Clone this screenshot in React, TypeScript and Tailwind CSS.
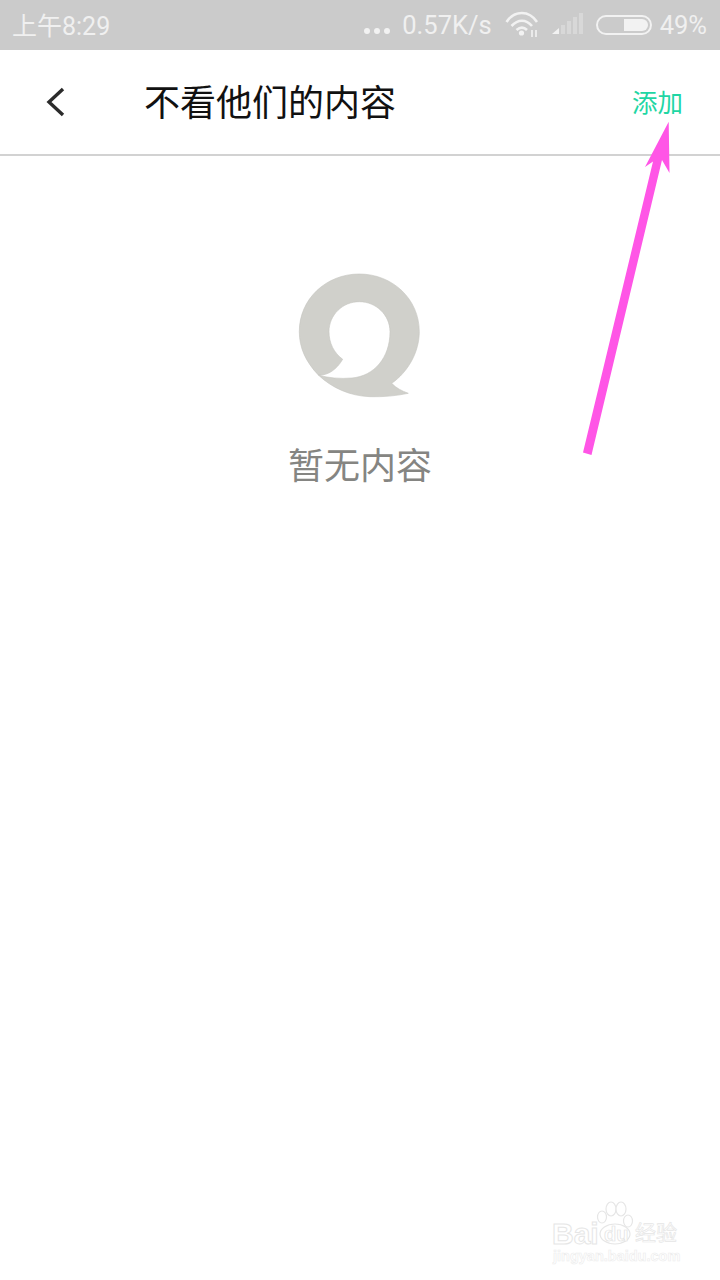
const SANS = "font-['Roboto','Noto_Sans_CJK_SC',sans-serif]";

function WifiIcon() {
  return (
    <svg width="36" height="34" viewBox="0 0 36 34" fill="none" stroke="#f2f2f2" strokeWidth="2.6">
      <path d="M1.5 14C9.500 2 24 2 32 14" />
      <path d="M6.500 18C13 11 21 11 27 18" />
      <path d="M11.500 22C15 19 19 19 22 22" />
      <circle cx="16.500" cy="25" r="2.6" fill="#f2f2f2" stroke="none" />
      <path d="M27 22V29M31 22V29" strokeWidth="1.6" />
    </svg>
  );
}

function SignalIcon() {
  return (
    <svg width="32" height="24" viewBox="0 0 32 24">
      <path d="M0 21L7 15V21Z" fill="#f2f2f2" />
      <path d="M9 12H13V21H9ZM15 8H19V21H15ZM21 4H25V21H21ZM27 0H31V21H27Z" fill="#d8d8d8" />
    </svg>
  );
}

function BatteryIcon() {
  return (
    <div className="w-[56px] h-[20px] rounded-full border-2 border-[#f2f2f2] p-[2px] flex justify-end">
      <div className="w-[24px] h-full rounded-r-full bg-[#f2f2f2]" />
    </div>
  );
}

function EmptyLogo() {
  return (
    <svg width="130" height="130" viewBox="295 270 130 130" className="block">
      <path
        fill="#d0d0cb"
        fillRule="evenodd"
        stroke="#c4c4bf"
        strokeWidth="0.6"
        d="M318.300 375C306 362 299.300 348 299.300 331.700C299.300 299 326 274 359.300 274C392.500 274 419.300 299 419.300 331.700C419.300 352 408 372 391.700 383.300C396 388 402 391 408.300 393.300C396 396 383 397 370 396.700C350 396 332 388 318.300 375ZM318.300 375C328 376 337 369 342.700 359.300C334 353 329 343 329 331.700C329 315 342.500 301.700 359.300 301.700C376 301.700 390 315 390 331.700C390 358 374 376 352 378C340 379 328 378 318.300 375Z"
      />
    </svg>
  );
}

function Arrow() {
  return (
    <svg width="720" height="1280" viewBox="0 0 720 1280" className="absolute inset-0 pointer-events-none">
      <path
        fill="#ff55e6"
        d="M668.700 121.700L669.500 173L662 160L591.500 455L583 452.500L653 161.500L645 167Z"
      />
    </svg>
  );
}

function Watermark() {
  return (
    <div className="absolute left-[552px] top-[1200px] w-[136px] h-[66px] font-['Liberation_Sans','Noto_Sans_CJK_SC',sans-serif] text-white">
      <svg width="56" height="50" viewBox="0 0 56 50" className="absolute left-[38px] top-0" fill="#ffffff" stroke="#e6e6e6" strokeWidth="1.2">
        <ellipse cx="12" cy="17" rx="4.500" ry="6" />
        <ellipse cx="21" cy="9" rx="5" ry="7" />
        <ellipse cx="31" cy="9" rx="5" ry="7" />
        <ellipse cx="38" cy="21" rx="4.500" ry="6" />
        <ellipse cx="25" cy="34" rx="15" ry="10" />
      </svg>
      <span className="absolute left-0 top-[17px] text-[30px] leading-[34px] font-bold [-webkit-text-stroke:1px_#e6e6e6]">Bai</span>
      <span className="absolute left-[52px] top-[22px] text-[20px] leading-[24px] font-bold [-webkit-text-stroke:0.7px_#e2e2e2]">du</span>
      <span className="absolute left-[83px] top-[20px] text-[21px] leading-[26px] whitespace-nowrap [-webkit-text-stroke:0.7px_#e6e6e6]">经验</span>
      <span className="absolute left-[1px] top-[47px] text-[14.500px] leading-[18px] font-bold whitespace-nowrap [-webkit-text-stroke:0.6px_#ececec]">jingyan.baidu.com</span>
    </div>
  );
}

export default function App() {
  return (
    <div className={`relative w-[720px] h-[1280px] overflow-hidden bg-white ${SANS}`}>
      {/* status bar */}
      <div className="h-[50px] bg-[#cbcbcb] flex items-center pl-[12px] pr-[12px] text-[#f0f0f0] text-[25px] leading-none">
        <span className="mt-[2px]">上午8:29</span>
        <div className="ml-auto flex items-center">
          <div className="flex gap-[4px] mt-[12px] mr-[12px]">
            <span className="w-[6px] h-[6px] rounded-full bg-[#f2f2f2]" />
            <span className="w-[6px] h-[6px] rounded-full bg-[#f2f2f2]" />
            <span className="w-[6px] h-[6px] rounded-full bg-[#f2f2f2]" />
          </div>
          <span className="mt-[2px] mr-[13px] text-[25.500px]">0.57K/s</span>
          <WifiIcon />
          <div className="ml-[11px] mr-[12px]">
            <SignalIcon />
          </div>
          <BatteryIcon />
          <span className="mt-[2px] ml-[8px] mr-[1px] text-[25.500px]">49%</span>
        </div>
      </div>

      {/* header */}
      <div className="h-[106px] border-b-2 border-[#d2d2d2] flex items-center pl-[46px] pr-[37px]">
        <svg width="20" height="32" viewBox="0 0 20 32" fill="none" stroke="#2b2b2b" strokeWidth="3.4">
          <path d="M17 3L3 16L17 29" />
        </svg>
        <h1 className="ml-[78px] mt-[4px] text-[36px] leading-none text-[#111111] font-normal">不看他们的内容</h1>
        <span className="ml-auto mt-[3px] text-[25.500px] leading-none text-[#1fd6a4]">添加</span>
      </div>

      {/* empty state */}
      <div className="flex flex-col items-center pt-[114px]">
        <EmptyLogo />
        <p className="mt-[41px] text-[36px] leading-[52px] text-[#858582]">暂无内容</p>
      </div>

      <Arrow />
      <Watermark />
    </div>
  );
}
